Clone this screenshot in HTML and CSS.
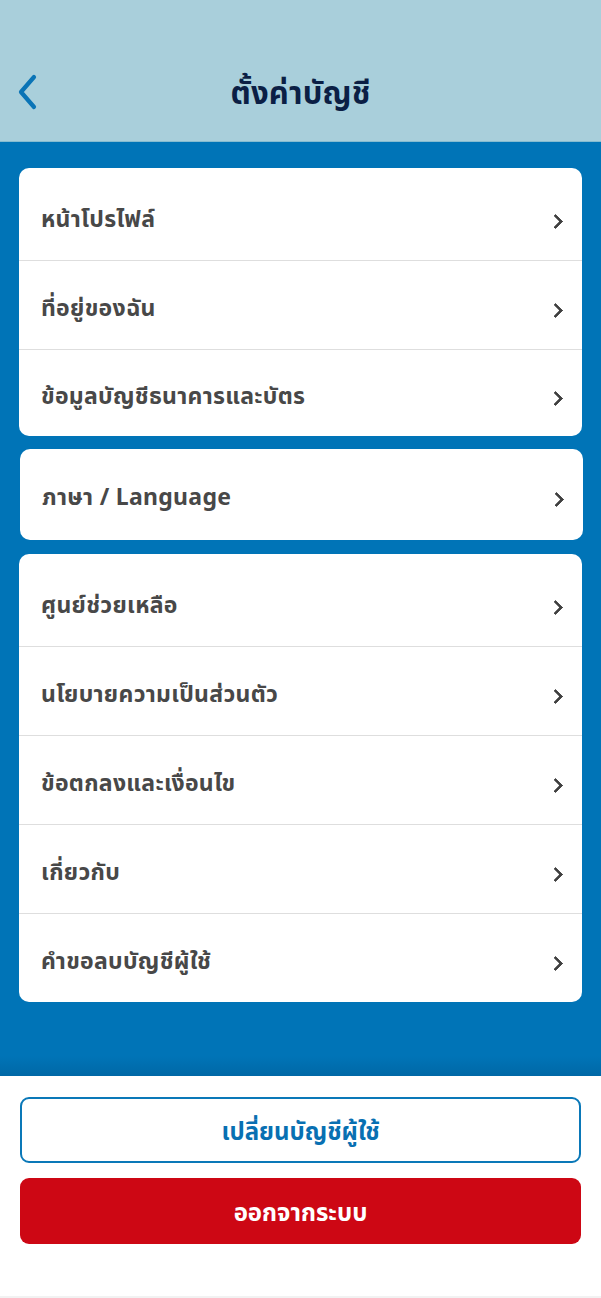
FILE: index.html
```html
<!DOCTYPE html>
<html lang="th">
<head>
<meta charset="utf-8">
<title>ตั้งค่าบัญชี</title>
<link rel="stylesheet" href="styles.css">
</head>
<body>
<div class="screen">
  <header class="topbar">
    <button class="back" aria-label="กลับ">
      <svg width="24" height="38" viewBox="0 0 24 38"><path d="M19 4 L6 19 L19 34" fill="none" stroke="#0a74b6" stroke-width="4.2" stroke-linecap="round" stroke-linejoin="round"/></svg>
    </button>
    <h1 class="title">ตั้งค่าบัญชี</h1>
  </header>

  <main class="content">
    <section class="card card-1">
      <a class="row"><span>หน้าโปรไฟล์</span><i class="chev"></i></a>
      <a class="row"><span>ที่อยู่ของฉัน</span><i class="chev"></i></a>
      <a class="row"><span>ข้อมูลบัญชีธนาคารและบัตร</span><i class="chev"></i></a>
    </section>
    <section class="card card-2">
      <a class="row"><span>ภาษา / Language</span><i class="chev"></i></a>
    </section>
    <section class="card card-3">
      <a class="row"><span>ศูนย์ช่วยเหลือ</span><i class="chev"></i></a>
      <a class="row"><span>นโยบายความเป็นส่วนตัว</span><i class="chev"></i></a>
      <a class="row"><span>ข้อตกลงและเงื่อนไข</span><i class="chev"></i></a>
      <a class="row"><span>เกี่ยวกับ</span><i class="chev"></i></a>
      <a class="row"><span>คำขอลบบัญชีผู้ใช้</span><i class="chev"></i></a>
    </section>
  </main>

  <footer class="actions">
    <button class="btn btn-outline">เปลี่ยนบัญชีผู้ใช้</button>
    <button class="btn btn-red">ออกจากระบบ</button>
  </footer>
</div>
</body>
</html>
```

FILE: styles.css
```css
* { box-sizing: border-box; }
html, body { margin: 0; padding: 0; }
body {
  width: 601px;
  height: 1298px;
  font-family: "Noto Sans", "Noto Sans Thai", "Liberation Sans", sans-serif;
  background: #ffffff;
}
.screen {
  display: flex;
  flex-direction: column;
  height: 1298px;
}
.topbar {
  height: 142px;
  background: #a9cfdb;
  border-bottom: 1px solid #86bcd0;
  display: flex;
  align-items: center;
  justify-content: center;
  padding-top: 48px;
  position: relative;
}
.back {
  position: absolute;
  left: 15px;
  top: 73px;
  background: none;
  border: 0;
  padding: 0;
  width: 24px;
  height: 38px;
}
.back svg { display: block; }
.title {
  margin: 0;
  font-size: 31px;
  font-weight: 700;
  color: #0b1f45;
  letter-spacing: 0.2px;
}
.content {
  background: linear-gradient(to bottom, #0074b7 0, #0074b7 calc(100% - 20px), #0068a6 100%);
  height: 934px;
  padding: 26px 19px 0 19px;
  display: flex;
  flex-direction: column;
}
.card {
  background: #ffffff;
  border-radius: 10px;
  display: flex;
  flex-direction: column;
  padding-top: 4px;
  overflow: hidden;
}
.card-1 { height: 268px; margin-bottom: 13px; }
.card-2 { height: 91px; margin-bottom: 14px; margin-left: 1px; margin-right: -1px; }
.card-3 { height: 448px; }
.row {
  height: 89px;
  flex: none;
  display: flex;
  align-items: center;
  justify-content: space-between;
  padding: 6px 17px 0 22px;
  border-bottom: 1px solid #dedede;
  color: #484848;
  font-size: 23px;
  font-weight: 700;
  letter-spacing: 0.3px;
}
.row:last-child { border-bottom: 0; flex: 1; }
.card-2 .row { padding-top: 2px; }
.chev {
  width: 11px;
  height: 11px;
  border-right: 3px solid #3f3f3f;
  border-top: 3px solid #3f3f3f;
  transform: rotate(45deg);
  margin-right: 4px;
  margin-top: 4px;
  border-radius: 1px;
}
.actions {
  flex: 1;
  background: #ffffff;
  padding: 21px 20px 0 20px;
  display: flex;
  flex-direction: column;
  gap: 15px;
  border-bottom: 2px solid #f2f2f2;
}
.btn {
  height: 66px;
  border-radius: 9px;
  font-family: inherit;
  font-size: 24px;
  font-weight: 700;
  padding-top: 6px;
}
.btn-outline {
  background: #ffffff;
  border: 2px solid #0a78b8;
  color: #0870b2;
}
.btn-red {
  background: #cd0714;
  border: 0;
  color: #ffffff;
}
```
